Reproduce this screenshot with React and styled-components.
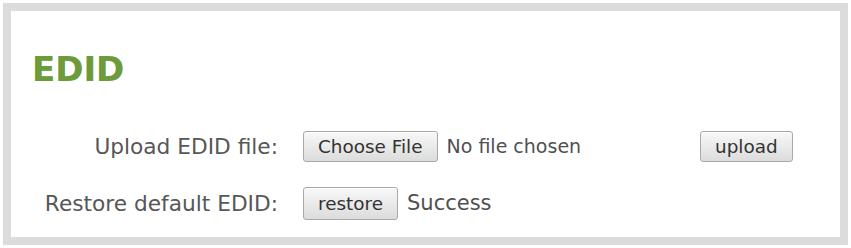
import React from 'react'
import styled, { createGlobalStyle } from 'styled-components'

const Global = createGlobalStyle`
  html, body {
    margin: 0;
    padding: 0;
    background: #fff;
  }
  body {
    font-family: 'DejaVu Sans', Verdana, sans-serif;
  }
`

const Page = styled.div`
  padding: 3px;
  width: 851px;
  height: 248px;
  box-sizing: border-box;
`

const Panel = styled.section`
  box-sizing: border-box;
  width: 845px;
  height: 242px;
  border: 8px solid #dcdcdc;
  background: #fff;
  padding: 38px 0 0 21px;
`

const Heading = styled.h2`
  margin: 0;
  font-family: 'DejaVu Sans', Verdana, sans-serif;
  font-weight: bold;
  font-size: 34px;
  line-height: 40px;
  color: #6c9a3c;
  text-shadow: 0 0 1px #cfe39a;
`

const Form = styled.div`
  display: grid;
  grid-template-columns: 246px auto;
  grid-auto-rows: 40px;
  column-gap: 25px;
  row-gap: 17px;
  margin-top: 37px;
  align-items: center;
`

const Label = styled.label`
  text-align: right;
  font-size: 21.7px;
  color: #575757;
  white-space: nowrap;
`

const Field = styled.div`
  display: flex;
  align-items: center;
`

const FileBox = styled.div`
  display: flex;
  align-items: center;
  width: 397px;
`

const Button = styled.button`
  height: ${p => p.$h || 31}px;
  padding: 0 14px;
  font-family: 'DejaVu Sans', Verdana, sans-serif;
  font-size: 18.4px;
  color: #333;
  background: linear-gradient(#f8f8f8, #dcdcdc);
  border: 1px solid #a9a9a9;
  border-radius: 3px;
  box-shadow: inset 0 1px 0 #fff;
  cursor: pointer;
`

const Note = styled.span`
  margin-left: 9px;
  font-size: ${p => p.$size || 19}px;
  color: #505050;
  white-space: nowrap;
`

export default function App() {
  return (
    <Page>
      <Global />
      <Panel>
        <Heading>EDID</Heading>
        <Form>
          <Label>Upload EDID file:</Label>
          <Field>
            <FileBox>
              <Button>Choose File</Button>
              <Note>No file chosen</Note>
            </FileBox>
            <Button>upload</Button>
          </Field>
          <Label>Restore default EDID:</Label>
          <Field>
            <Button $h={33}>restore</Button>
            <Note $size={21}>Success</Note>
          </Field>
        </Form>
      </Panel>
    </Page>
  )
}
